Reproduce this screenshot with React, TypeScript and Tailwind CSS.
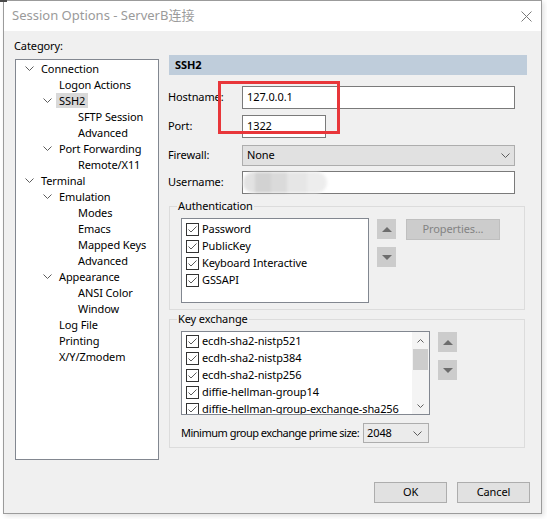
import React from "react";

type Node = { label: string; level: 0 | 1 | 2; open?: boolean; selected?: boolean };

const tree: Node[] = [
  { label: "Connection", level: 0, open: true },
  { label: "Logon Actions", level: 1 },
  { label: "SSH2", level: 1, open: true, selected: true },
  { label: "SFTP Session", level: 2 },
  { label: "Advanced", level: 2 },
  { label: "Port Forwarding", level: 1, open: true },
  { label: "Remote/X11", level: 2 },
  { label: "Terminal", level: 0, open: true },
  { label: "Emulation", level: 1, open: true },
  { label: "Modes", level: 2 },
  { label: "Emacs", level: 2 },
  { label: "Mapped Keys", level: 2 },
  { label: "Advanced", level: 2 },
  { label: "Appearance", level: 1, open: true },
  { label: "ANSI Color", level: 2 },
  { label: "Window", level: 2 },
  { label: "Log File", level: 1 },
  { label: "Printing", level: 1 },
  { label: "X/Y/Zmodem", level: 1 },
];

const indent = ["pl-[7px]", "pl-[25px]", "pl-[44px]"];

const authMethods = ["Password", "PublicKey", "Keyboard Interactive", "GSSAPI"];
const kexMethods = [
  "ecdh-sha2-nistp521",
  "ecdh-sha2-nistp384",
  "ecdh-sha2-nistp256",
  "diffie-hellman-group14",
  "diffie-hellman-group-exchange-sha256",
];

function Chevron({ className = "" }: { className?: string }) {
  return (
    <svg width="9" height="5" viewBox="0 0 9 5" className={className}>
      <path d="M0.5 0.5 L4.5 4.5 L8.5 0.5" fill="none" stroke="#5c5c5c" strokeWidth="1" />
    </svg>
  );
}

function Check() {
  return (
    <span className="flex h-[13px] w-[13px] shrink-0 items-center justify-center border border-[#333] bg-white">
      <svg width="11" height="11" viewBox="0 0 11 11">
        <path d="M1.5 5.5 L4 8 L9.5 2.5" fill="none" stroke="#5a5a5a" strokeWidth="1" />
      </svg>
    </span>
  );
}

function MoveButtons() {
  return (
    <div className="mt-[1px] flex flex-col gap-[8px]">
      <div className="flex h-[20px] w-[19px] items-center justify-center bg-[#cccccc]">
        <svg width="10" height="5" viewBox="0 0 10 5">
          <path d="M0 5 L5 0 L10 5 Z" fill="#6d6d6d" />
        </svg>
      </div>
      <div className="flex h-[20px] w-[19px] items-center justify-center bg-[#cccccc]">
        <svg width="10" height="5" viewBox="0 0 10 5">
          <path d="M0 0 L5 5 L10 0 Z" fill="#6d6d6d" />
        </svg>
      </div>
    </div>
  );
}

export default function App() {
  return (
    <div className="relative h-[519px] w-[547px] bg-white font-['Noto_Sans','Noto_Sans_CJK_SC',sans-serif] text-[11px] tracking-[-0.1px] text-black">
      <div className="absolute left-0 top-0 h-[2px] w-[7px] bg-[#4a4a4a]" />

      <div className="ml-[3px] flex h-[514px] w-[539px] flex-col border border-[#9b9b9b] bg-[#f0f0f0] shadow-[2px_2px_5px_rgba(0,0,0,0.12)]">
        {/* title bar */}
        <div className="flex h-[30px] items-center justify-between bg-white pl-[8px] pr-[9px]">
          <span className="text-[13px] tracking-normal text-[#9a9a9a]">Session Options - ServerB连接</span>
          <svg width="11" height="11" viewBox="0 0 11 11">
            <path d="M0.5 0.5 L10.5 10.5 M10.5 0.5 L0.5 10.5" stroke="#7a7a7a" strokeWidth="1" />
          </svg>
        </div>

        <div className="flex flex-1 flex-col px-[11px]">
          <div className="flex">
            {/* category tree */}
            <div className="flex w-[144px] flex-col pt-[7px]">
              <span className="-ml-[1px] leading-[16px]">Category:</span>
              <div className="mt-[5px] h-[401px] border border-[#828790] bg-white">
                {tree.map((n, i) => (
                  <div key={i} className={`flex h-4 items-center ${indent[n.level]}`}>
                    <span className="flex w-[18px] shrink-0">{n.open ? <Chevron className="ml-[2px]" /> : null}</span>
                    <span
                      className={
                        n.selected ? "-ml-[3px] bg-[#d9d9d9] px-[3px] leading-[15px]" : "leading-[15px]"
                      }
                    >
                      {n.label}
                    </span>
                  </div>
                ))}
              </div>
            </div>

            {/* SSH2 page */}
            <div className="ml-[10px] flex w-[358px] flex-col pt-[24px]">
              <div className="flex h-[20px] items-center bg-[#bfcddb] pl-[6px] font-bold">SSH2</div>

              <div className="mt-[11px] flex items-center">
                <span className="-ml-[1px] w-[74px]">Hostname:</span>
                <div className="flex h-[23px] w-[273px] items-center border border-[#7a7a7a] bg-white pl-[4px]">127.0.0.1</div>
              </div>
              <div className="mt-[6px] flex items-center">
                <span className="-ml-[1px] w-[74px]">Port:</span>
                <div className="flex h-[23px] w-[84px] items-center border border-[#7a7a7a] bg-white pl-[4px]">1322</div>
              </div>
              <div className="mt-[7px] flex items-center">
                <span className="-ml-[1px] w-[74px]">Firewall:</span>
                <div className="flex h-[21px] w-[273px] items-center justify-between border border-[#adadad] bg-[#e1e1e1] pl-[4px] pr-[4px]">
                  <span>None</span>
                  <Chevron />
                </div>
              </div>
              <div className="mt-[5px] flex items-center">
                <span className="-ml-[1px] w-[74px]">Username:</span>
                <div className="flex h-[23px] w-[273px] items-center border border-[#7a7a7a] bg-white">
                  <div className="flex h-full blur-[1.5px]">
                    <div className="h-full w-[12px] rounded-l-full bg-[#e2e2e2]" />
                    <div className="h-full w-[16px] bg-[#d2d2d2]" />
                    <div className="h-full w-[16px] bg-[#dadada]" />
                    <div className="h-full w-[20px] bg-[#e6e6e6]" />
                    <div className="h-full w-[20px] rounded-r-full bg-[#ededed]" />
                  </div>
                </div>
              </div>

              {/* Authentication */}
              <fieldset className="mt-[5px] w-[356px] border border-[#dcdcdc] pb-[6px]">
                <legend className="ml-[7px] px-[1px] leading-[14px]">Authentication</legend>
                <div className="mt-[5px] flex pl-[11px]">
                  <div className="h-[85px] w-[188px] border border-[#828790] bg-white pl-[4px] pt-[2px]">
                    {authMethods.map((m) => (
                      <div key={m} className="flex h-[17px] items-center">
                        <Check />
                        <span className="ml-[3px]">{m}</span>
                      </div>
                    ))}
                  </div>
                  <div className="ml-[8px]">
                    <MoveButtons />
                  </div>
                  <div className="ml-[10px] mt-[1px] flex h-[21px] w-[94px] items-center justify-center border border-[#bfbfbf] bg-[#cccccc] text-[#838383]">
                    Properties...
                  </div>
                </div>
              </fieldset>

              {/* Key exchange */}
              <fieldset className="mt-[2px] w-[356px] border border-[#dcdcdc] pb-[4px]">
                <legend className="ml-[7px] px-[1px] leading-[14px]">Key exchange</legend>
                <div className="mt-[5px] flex pl-[11px]">
                  <div className="flex h-[84px] w-[249px] border border-[#828790] bg-white">
                    <div className="flex-1 overflow-hidden pl-[4px] pt-[1px]">
                      {kexMethods.map((m) => (
                        <div key={m} className="flex h-[17px] shrink-0 items-center whitespace-nowrap">
                          <Check />
                          <span className="ml-[3px]">{m}</span>
                        </div>
                      ))}
                    </div>
                    <div className="flex w-[17px] flex-col bg-[#f4f4f4]">
                      <div className="flex h-[17px] items-center justify-center">
                        <svg width="7" height="4" viewBox="0 0 7 4">
                          <path d="M0.5 3.5 L3.5 0.5 L6.5 3.5" fill="none" stroke="#606060" />
                        </svg>
                      </div>
                      <div className="mx-[1px] h-[21px] bg-[#cdcdcd]" />
                      <div className="flex-1" />
                      <div className="flex h-[17px] items-center justify-center">
                        <svg width="7" height="4" viewBox="0 0 7 4">
                          <path d="M0.5 0.5 L3.5 3.5 L6.5 0.5" fill="none" stroke="#606060" />
                        </svg>
                      </div>
                    </div>
                  </div>
                  <div className="ml-[8px]">
                    <MoveButtons />
                  </div>
                </div>
                <div className="mt-[8px] flex items-center pl-[11px]">
                  <span className="w-[182px] shrink-0 whitespace-nowrap tracking-[-0.5px]">Minimum group exchange prime size:</span>
                  <div className="flex h-[20px] w-[66px] items-center justify-between border border-[#adadad] bg-[#ebebeb] pl-[3px] pr-[6px]">
                    <span>2048</span>
                    <Chevron />
                  </div>
                </div>
              </fieldset>
            </div>
          </div>

          {/* footer */}
          <div className="mt-auto flex justify-end gap-[10px] pb-[10px]">
            <div className="flex h-[21px] w-[73px] items-center justify-center border border-[#adadad] bg-[#e1e1e1]">OK</div>
            <div className="flex h-[21px] w-[73px] items-center justify-center border border-[#adadad] bg-[#e1e1e1]">Cancel</div>
          </div>
        </div>
      </div>

      {/* annotation */}
      <div className="absolute left-[218px] top-[81px] h-[53px] w-[122px] border-[3px] border-[#e8363a]" />
    </div>
  );
}
